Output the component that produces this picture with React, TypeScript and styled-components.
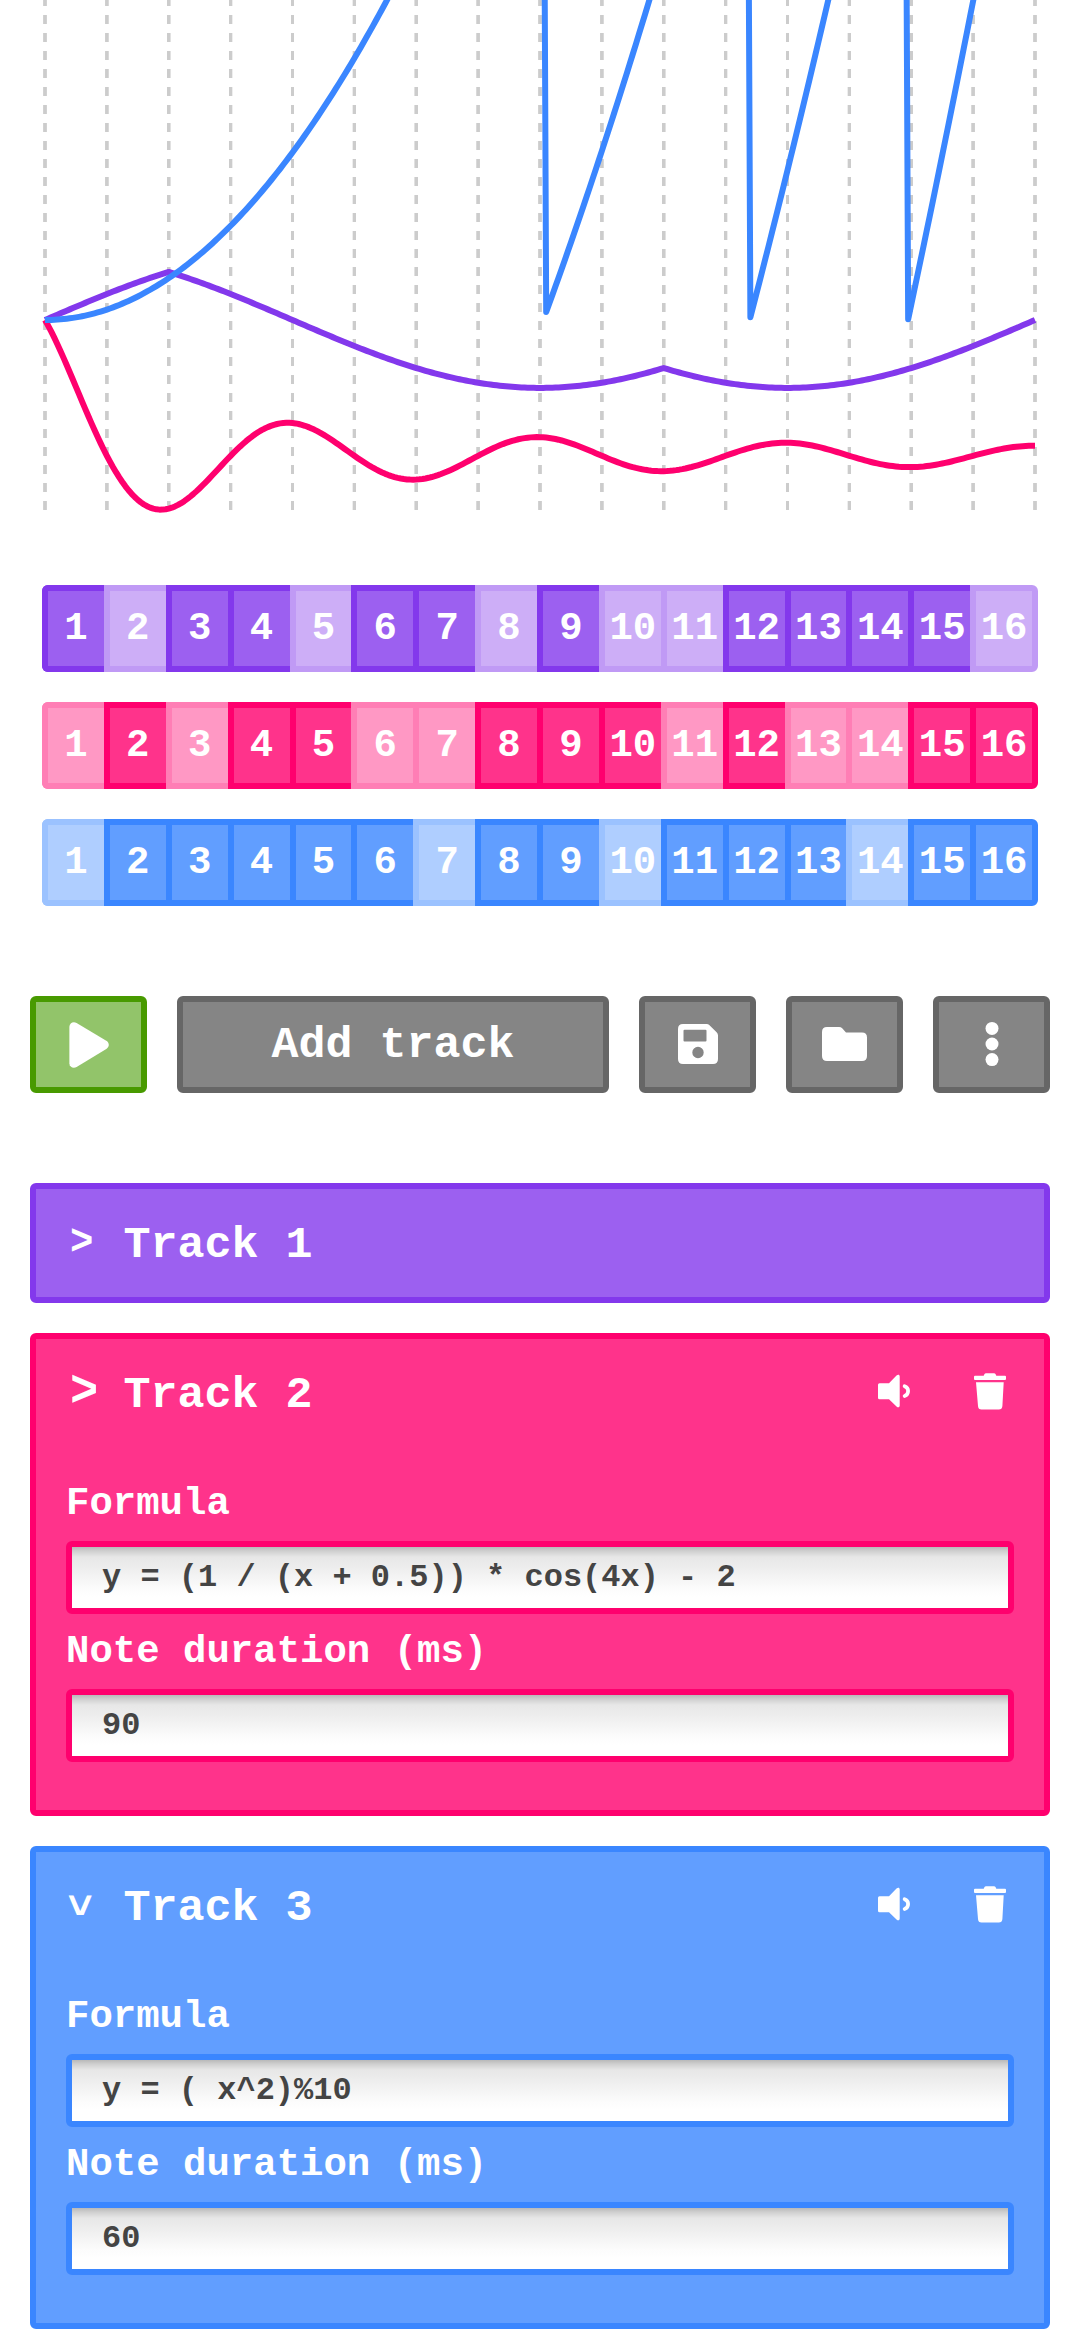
import React from "react";
import styled, { createGlobalStyle } from "styled-components";

const GlobalStyle = createGlobalStyle`
  *, *::before, *::after { box-sizing: border-box; }
  html, body { margin: 0; padding: 0; background: #fff; }
  body { height: 2340px; overflow: hidden; }
  body, button, input { font-family: "Liberation Mono", "Courier New", monospace; font-weight: 700; }
`;

type Palette = { edge: string; fill: string };

const purple: Palette = { edge: "#8338ec", fill: "#9c60f0" };
const pink: Palette = { edge: "#ff006e", fill: "#ff338b" };
const blue: Palette = { edge: "#3a86ff", fill: "#619eff" };
const gray: Palette = { edge: "#666666", fill: "#858585" };
const green: Palette = { edge: "#489a00", fill: "#92c46a" };

const Page = styled.main`
  width: 1080px;
  display: flex;
  flex-direction: column;
`;

const Graph = styled.svg`
  display: block;
  width: 1080px;
  height: 540px;
`;

const Sequencer = styled.section`
  display: flex;
  flex-direction: column;
  gap: 30px;
  padding: 45px 42px 0;
`;

const StepRow = styled.div`
  display: flex;
  height: 87px;
`;

const Step = styled.button<{ $tone: Palette; $on: boolean }>`
  flex: 0 0 61.875px;
  padding: 0;
  border: 6px solid ${(p) => p.$tone.edge};
  border-right-width: 0;
  background: ${(p) => p.$tone.fill};
  color: #fff;
  font-size: 39px;
  line-height: 44px;
  text-align: center;
  white-space: nowrap;
  opacity: ${(p) => (p.$on ? 1 : 0.5)};

  &:first-child { border-radius: 6px 0 0 6px; }
  &:last-child {
    flex-basis: 67.875px;
    border-right-width: 6px;
    border-radius: 0 6px 6px 0;
  }
`;

const Toolbar = styled.nav`
  display: flex;
  gap: 30px;
  padding: 90px 30px;
`;

const ToolButton = styled.button<{ $tone: Palette; $wide?: boolean }>`
  display: flex;
  align-items: center;
  justify-content: center;
  flex: ${(p) => (p.$wide ? "1 1 0" : "0 0 117px")};
  height: 97px;
  padding: ${(p) => (p.$wide ? "2px 0 0" : "0")};
  border: 6px solid ${(p) => p.$tone.edge};
  border-radius: 6px;
  background: ${(p) => p.$tone.fill};
  color: #fff;
  font-size: 45px;
  line-height: 51px;
`;

const Icon = styled.svg<{ $raised?: boolean }>`
  display: block;
  margin-bottom: ${(p) => (p.$raised ? "2px" : "0")};
  fill: #fff;
`;

const TrackList = styled.section`
  display: flex;
  flex-direction: column;
  gap: 30px;
  padding: 0 30px;
`;

const TrackPanel = styled.article<{ $tone: Palette }>`
  display: flex;
  flex-direction: column;
  border: 6px solid ${(p) => p.$tone.edge};
  border-radius: 6px;
  background: ${(p) => p.$tone.fill};
  color: #fff;
`;

const TrackHeader = styled.header`
  display: flex;
  align-items: center;
  height: 108px;
  padding: 0 38px 0 32px;
`;

const Chevron = styled.span<{ $open?: boolean; $large?: boolean }>`
  width: 23.4px;
  margin-right: 32px;
  font-size: ${(p) => (p.$large ? 47 : 39)}px;
  line-height: 44px;
  transform: ${(p) =>
    p.$open ? "translate(-2.8px, -0.7px) rotate(90deg) scaleY(1.11)" : "translate(2px, -0.3px) scaleY(1.11)"};
`;

const TrackTitle = styled.h2`
  flex: 1;
  margin: 0;
  padding-top: 5px;
  font-size: 45px;
  font-weight: 700;
  line-height: 51px;
`;

const TrackActions = styled.div`
  display: flex;
  gap: 60px;
  padding-bottom: 4px;
`;

const Fields = styled.div`
  display: flex;
  flex-direction: column;
  padding: 19px 30px 48px;
`;

const Label = styled.label`
  height: 75px;
  font-size: 39px;
  line-height: 77px;
`;

const TextInput = styled.input<{ $tone: Palette }>`
  display: block;
  width: 100%;
  height: 73px;
  padding: 0 30px;
  border: 6px solid ${(p) => p.$tone.edge};
  border-radius: 6px;
  outline: none;
  background: linear-gradient(#b9b9b9 0, #cfcfcf 4px, #e7e7e7 10px, #ededed 20px, #fcfcfc 42px, #fff 50px) padding-box;
  color: #444;
  font-size: 32px;
`;

const LEFT = 45;
const WIDTH = 990;
const ZERO = 320;
const UNIT = 67.9;
const DOMAIN = Math.PI * 2;

function plot(f: (x: number) => number, samples: number) {
  const points: string[] = [];
  for (let i = 0; i <= samples; i++) {
    const x = (i / samples) * DOMAIN;
    points.push(`${(LEFT + (i / samples) * WIDTH).toFixed(2)},${(ZERO - f(x) * UNIT).toFixed(2)}`);
  }
  return points.join(" ");
}

const curves = [
  { color: purple.edge, points: plot((x) => Math.min(Math.sin(x), Math.cos(x)), 320) },
  { color: pink.edge, points: plot((x) => (1 / (x + 0.5)) * Math.cos(4 * x) - 2, 320) },
  { color: blue.edge, points: plot((x) => (x * x) % 10, 320) },
];

const rows = [
  { tone: purple, steps: "1011011010011110" },
  { tone: pink, steps: "0101100111010011" },
  { tone: blue, steps: "0111110110111011" },
];

const tracks = [
  { name: "Track 1", tone: purple, open: false },
  {
    name: "Track 2",
    tone: pink,
    open: true,
    hovered: true,
    formula: "y = (1 / (x + 0.5)) * cos(4x) - 2",
    duration: "90",
  },
  { name: "Track 3", tone: blue, open: true, formula: "y = ( x^2)%10", duration: "60" },
];

const PlayIcon = () => (
  <Icon width="40" height="46" viewBox="0 0 40 46">
    <path d="M.4 4.800C.4.900 4.300-1 7.600.900L37.300 18.700c3.300 2 3.300 6.300 0 8.400L7.600 45C4.300 46.900.4 45 .4 41.200z" />
  </Icon>
);

const SaveIcon = () => (
  <Icon $raised width="40" height="40" viewBox="0 0 40 40">
    <path
      fillRule="evenodd"
      d="M5 0h23.500q1.800 0 3 1.200L38.600 8.200Q40 9.500 40 11.400V35q0 5-5 5H5q-5 0-5-5V5Q0 0 5 0zM6.500 5.700q-1 0-1 1v9.900q0 1 1 1h21q1 0 1-1V6.700q0-1-1-1zM20 22.800a5.700 5.700 0 1 0 0 11.400a5.700 5.700 0 1 0 0-11.400z"
    />
  </Icon>
);

const FolderIcon = () => (
  <Icon $raised width="45" height="34" viewBox="0 0 45 34">
    <path d="M5 0h12q2 0 3.200 1.200L24 5.600h16q5 0 5 5V29q0 5-5 5H5q-5 0-5-5V5q0-5 5-5z" />
  </Icon>
);

const MoreIcon = () => (
  <Icon $raised width="14" height="46" viewBox="0 0 14 46">
    <circle cx="7" cy="7.400" r="6.500" />
    <circle cx="7" cy="23" r="6.500" />
    <circle cx="7" cy="38.600" r="6.500" />
  </Icon>
);

const VolumeIcon = () => (
  <Icon width="36" height="36" viewBox="0 0 36 36">
    <path d="M1.500 10.300H11L18.500 2.600C20 1 21.700 1.500 21.700 3.500v29c0 2-1.700 2.500-3.200.9L11 26.200H1.500Q0 26.200 0 24.700V11.800q0-1.500 1.500-1.500z" />
    <path d="M26.600 13.200c4.700 1.600 4.700 8.200 0 9.800" fill="none" stroke="#fff" strokeWidth="3.700" strokeLinecap="round" />
  </Icon>
);

const TrashIcon = () => (
  <Icon width="32" height="37" viewBox="0 0 32 37">
    <path d="M1 2.700H9.700L10.500 1Q11 .3 12 .3h8q1 0 1.500.7l.8 1.700H31q1 0 1 1V6q0 1-1 1H1Q0 7 0 6V3.700q0-1 1-1z" />
    <path d="M2 9.300H29.700L28.400 33q-.3 3.500-3.600 3.500H7.500Q4.200 36.500 4 33z" />
  </Icon>
);

const Grid = () => (
  <g stroke="#cccccc" strokeWidth={3} strokeDasharray="9 9">
    {Array.from({ length: 17 }, (_, i) => {
      const x = LEFT + (i * WIDTH) / 16;
      return <line key={i} x1={x} x2={x} y1={-3} y2={510} />;
    })}
  </g>
);

export default function App() {
  return (
    <>
      <GlobalStyle />
      <Page>
        <Graph viewBox="0 0 1080 540">
          {curves.map((c) => (
            <Grid key={c.color} />
          ))}
          {curves.map((c) => (
            <polyline key={c.color} points={c.points} fill="none" stroke={c.color} strokeWidth={6} strokeLinejoin="round" />
          ))}
        </Graph>

        <Sequencer>
          {rows.map((row) => (
            <StepRow key={row.tone.edge}>
              {[...row.steps].map((s, i) => (
                <Step key={i} $tone={row.tone} $on={s === "1"}>
                  {i + 1}
                </Step>
              ))}
            </StepRow>
          ))}
        </Sequencer>

        <Toolbar>
          <ToolButton $tone={green} aria-label="Play"><PlayIcon /></ToolButton>
          <ToolButton $tone={gray} $wide>Add track</ToolButton>
          <ToolButton $tone={gray} aria-label="Save"><SaveIcon /></ToolButton>
          <ToolButton $tone={gray} aria-label="Open"><FolderIcon /></ToolButton>
          <ToolButton $tone={gray} aria-label="More"><MoreIcon /></ToolButton>
        </Toolbar>

        <TrackList>
          {tracks.map((t) => (
            <TrackPanel key={t.name} $tone={t.tone}>
              <TrackHeader>
                <Chevron $open={t.open && !t.hovered} $large={t.hovered}>&gt;</Chevron>
                <TrackTitle>{t.name}</TrackTitle>
                {t.open && (
                  <TrackActions>
                    <VolumeIcon />
                    <TrashIcon />
                  </TrackActions>
                )}
              </TrackHeader>
              {t.open && (
                <Fields>
                  <Label>Formula</Label>
                  <TextInput $tone={t.tone} defaultValue={t.formula} />
                  <Label>Note duration (ms)</Label>
                  <TextInput $tone={t.tone} defaultValue={t.duration} />
                </Fields>
              )}
            </TrackPanel>
          ))}
        </TrackList>
      </Page>
    </>
  );
}
